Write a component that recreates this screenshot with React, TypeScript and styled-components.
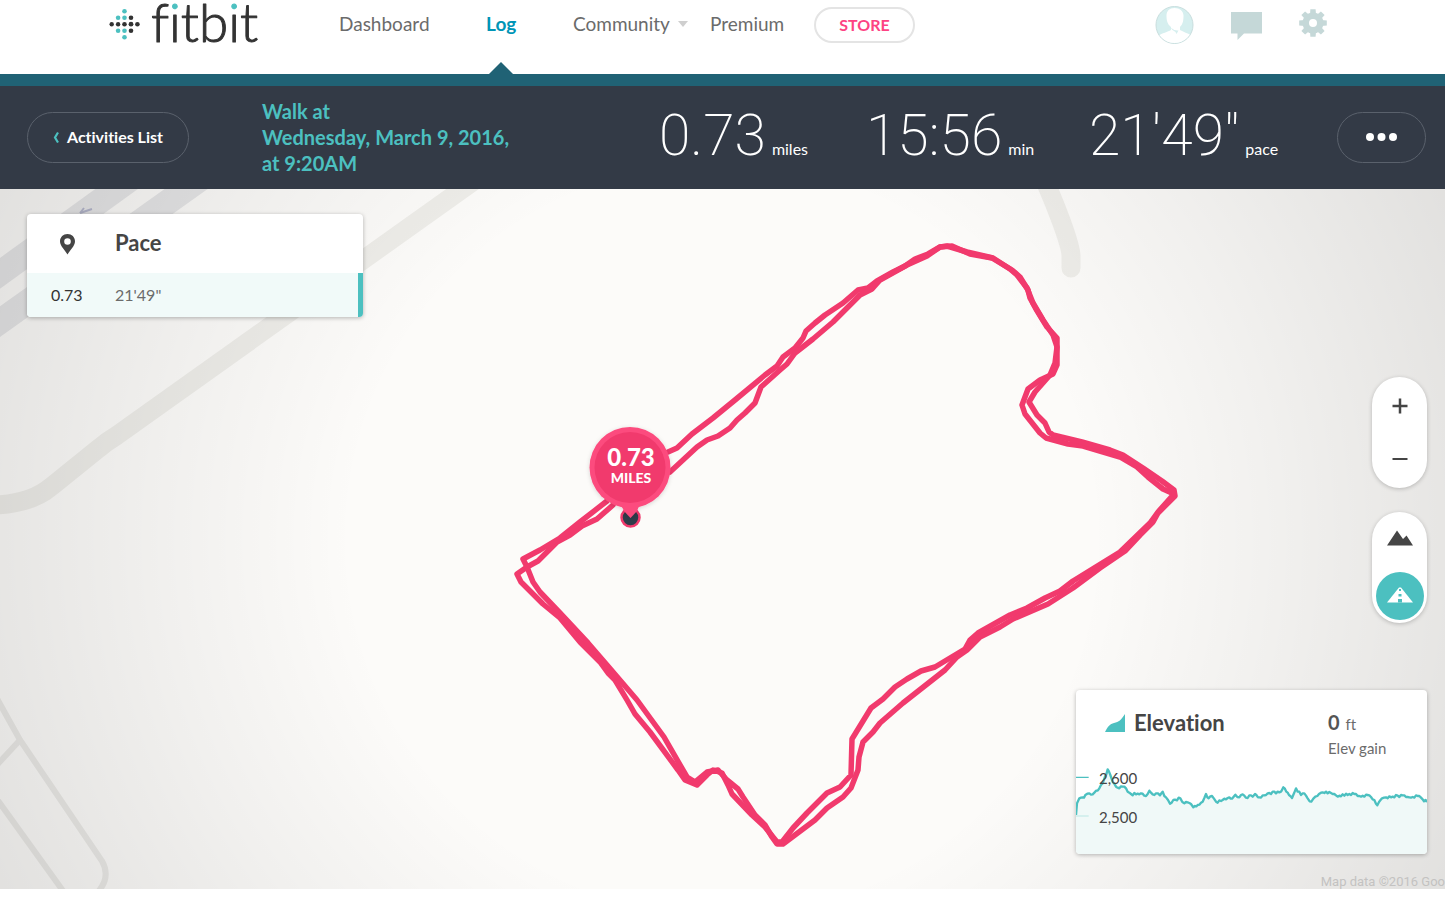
import React from "react";
import styled, { createGlobalStyle } from "styled-components";

const teal = "#4cc0c0";
const pink = "#f13a6d";
const ink = "#454545";

const GlobalStyle = createGlobalStyle`
  * { box-sizing: border-box; }
  body {
    margin: 0;
    background: #fff;
    color: ${ink};
    font-family: Lato, "Open Sans", sans-serif;
    font-variant-ligatures: none;
    overflow-x: hidden;
  }
  button { font: inherit; font-variant-ligatures: none; cursor: pointer; }
  a { text-decoration: none; }
`;

const Header = styled.header`
  display: grid;
  grid-template-columns: 229px auto 1fr auto;
  height: 86px;
  padding: 0 118px 0 110px;
  border-bottom: 12px solid #206275;
`;

const LogoLink = styled.a`
  display: block;
  height: 48px;
`;

const Nav = styled.nav`
  display: grid;
  grid-template-columns: 147px 87px 137px 104px auto;
  align-items: center;
  height: 48px;
`;

const NavLink = styled.a<{ $active?: boolean }>`
  position: relative;
  display: flex;
  align-items: center;
  gap: 8px;
  justify-self: start;
  font-size: 19px;
  line-height: 24px;
  font-weight: ${(p) => (p.$active ? 700 : 400)};
  color: ${(p) => (p.$active ? "#0095b6" : "#6b6b6b")};
`;

const ActiveMark = styled.span`
  position: absolute;
  top: 50px;
  left: 50%;
  margin-left: -12px;
  border: 12px solid transparent;
  border-top-width: 0;
  border-bottom-color: #206275;
`;

const Caret = styled.span`
  border: 5px solid transparent;
  border-bottom-width: 0;
  border-top: 6px solid #cfcfcf;
`;

const StoreLink = styled.a`
  width: 101px;
  height: 36px;
  margin-top: 2px;
  border: 2px solid #e4e4e4;
  border-radius: 18px;
  text-align: center;
  font-size: 16px;
  line-height: 32px;
  font-weight: 700;
  color: #fd4383;
`;

const Tools = styled.div`
  grid-column: 4;
  display: flex;
  align-items: center;
  gap: 37px;
  height: 50px;
`;

const IconButton = styled.button`
  display: flex;
  padding: 0;
  border: 0;
  background: none;
  color: #c5d8d8;
`;

const Summary = styled.section`
  display: grid;
  grid-template-columns: 235px minmax(260px, 397px) 207px 223px 1fr auto;
  align-items: center;
  height: 103px;
  padding: 0 19px 0 27px;
  background: #333a46;
  color: #fff;
`;

const PillButton = styled.button<{ $width: number }>`
  display: flex;
  align-items: center;
  justify-content: center;
  gap: 8px;
  width: ${(p) => p.$width}px;
  height: 51px;
  padding: 0 0 2px;
  border: 1px solid #5a616c;
  border-radius: 26px;
  background: none;
  color: #fff;
  font-size: 16px;
  line-height: 20px;
  font-weight: 700;
`;

const Title = styled.h1`
  margin: 0;
  padding-bottom: 2px;
  font-size: 20px;
  line-height: 26px;
  font-weight: 700;
  color: ${teal};
`;

const Metric = styled.div`
  display: flex;
  align-items: baseline;
  gap: 6px;
  padding-top: 10px;
  white-space: nowrap;
  font-size: 16px;
  line-height: 72px;
`;

const MetricValue = styled.span`
  font-family: Roboto, sans-serif;
  font-size: 57px;
  font-weight: 200;
`;

const MapArea = styled.main`
  position: relative;
  min-height: 700px;
  background: #fcfbf9;
  overflow: hidden;
`;

const MapDrawing = styled.svg`
  position: absolute;
  inset: 0;
  width: 100%;
  height: 100%;
`;

const Card = styled.section`
  position: absolute;
  background: #fff;
  border-radius: 4px;
  box-shadow: 0 1px 4px rgba(0, 0, 0, 0.28);
  overflow: hidden;
`;

const PaceCard = styled(Card)`
  top: 25px;
  left: 27px;
  width: 336px;
`;

const PaceTable = styled.table`
  width: 100%;
  border-collapse: collapse;
  text-align: left;
`;

const PaceHead = styled.th`
  height: 59px;
  padding: 0 0 2px;
  font-size: 22px;
  line-height: 26px;
  &:first-child { width: 88px; padding: 0 0 0 32px; }
  svg { display: block; }
`;

const PaceCell = styled.td`
  height: 44px;
  padding: 0 0 2px;
  background: #f1faf9;
  font-size: 16px;
  color: #6b6b6b;
  &:first-child { padding-left: 24px; color: #333; }
  &:last-child { border-right: 5px solid ${teal}; }
`;

const ControlGroup = styled.div<{ $inset: number }>`
  display: flex;
  flex-direction: column;
  align-items: center;
  justify-content: space-between;
  width: 55px;
  height: 111px;
  padding: ${(p) => p.$inset}px 3px;
  border-radius: 28px;
  background: #fff;
  box-shadow: 0 1px 4px rgba(0, 0, 0, 0.22);
`;

const Controls = styled.div`
  position: absolute;
  top: 188px;
  right: 18px;
  display: grid;
  gap: 24px;
`;

const RoundButton = styled.button<{ $active?: boolean }>`
  display: flex;
  align-items: center;
  justify-content: center;
  width: 48px;
  height: 48px;
  padding: 0;
  border: 0;
  border-radius: 50%;
  color: ${(p) => (p.$active ? "#fff" : ink)};
  background: ${(p) => (p.$active ? teal : "none")};
`;

const ElevationCard = styled(Card)`
  right: 18px;
  bottom: 35px;
  width: 351px;
`;

const ElevationHead = styled.div`
  display: flex;
  justify-content: space-between;
  height: 70px;
  padding: 20px 39px 0 29px;
`;

const ElevationTitle = styled.h2`
  display: flex;
  align-items: center;
  gap: 9px;
  height: 26px;
  margin: 0;
  font-size: 22px;
  line-height: 26px;
`;

const Gain = styled.div`
  width: 60px;
  white-space: nowrap;
  font-size: 15px;
  line-height: 24px;
  color: #6b6b6b;
  strong { font-size: 20px; color: #555; margin-right: 2px; }
`;

const Chart = styled.div`
  position: relative;
  height: 94px;
  svg { display: block; width: 100%; height: 94px; }
`;

const AxisLabel = styled.span<{ $top: number }>`
  position: absolute;
  left: 23px;
  top: ${(p) => p.$top}px;
  font-size: 15px;
  line-height: 18px;
`;

const Attribution = styled.small`
  position: absolute;
  right: 0;
  bottom: 0;
  white-space: nowrap;
  font-family: Roboto, sans-serif;
  font-size: 13px;
  line-height: 15px;
  color: #c3c2c1;
`;

const firstLap =
  "668,452 677,448 692,434 713,418 735,400 765,375 777,366 783,357 795,348 803,338 806,331 815,323 825,315 843,303 858,290 868,288 877,281 893,272 905,266 915,259 928,254 940,247 952,246 970,254 992,258 1012,270 1020,277 1028,290 1030,298 1036,309 1047,327 1057,338 1057,365 1053,374 1040,380 1028,389 1022,405 1025,414 1040,433 1046,438 1068,444 1083,446 1120,457 1137,467 1148,477 1163,489 1174,494 1158,512 1150,523 1120,552 1073,581 1060,591 1045,598 1027,608 1010,615 978,633 970,640 965,649 935,667 921,671 907,679 895,687 883,699 871,708 852,739 851,775 840,787 827,793 807,813 793,828 782,842 777,842 765,827 752,815 732,794 728,785 722,773 713,770 707,775 697,785 685,780 678,770 650,732 635,714 627,700 615,680 608,673 600,662 580,642 560,618 543,604 521,582 517,574 527,567 538,561 557,542 570,535 582,526 597,519 613,505";
const secondLap =
  "670,472 697,447 707,440 718,436 730,428 737,420 745,413 755,403 761,387 780,370 787,364 795,353 813,339 833,322 852,303 860,295 872,289 880,280 907,265 927,256 940,247 947,246 967,252 993,258 1010,269 1017,275 1027,288 1033,303 1043,320 1053,335 1057,347 1055,363 1050,375 1035,392 1029,402 1037,415 1045,423 1049,432 1053,435 1082,442 1110,450 1123,455 1143,468 1162,481 1174,490 1175,496 1158,513 1153,522 1140,535 1125,551 1100,568 1073,588 1048,604 1013,619 1000,627 980,637 967,650 957,657 945,670 903,703 880,723 873,732 863,742 859,757 858,770 851,788 843,797 827,808 815,820 783,844 777,844 772,837 765,825 755,815 743,797 738,789 727,780 718,770 707,772 695,782 687,777 680,765 664,737 637,700 607,665 588,643 560,613 540,592 533,582 527,567 523,559 540,550 560,538 580,522 607,501";

/* Elevation samples: distance and height, three units to the pixel. */
const samples: [number, number][] = [
  [0, 165], [3, 130], [10, 115], [20, 112], [28, 105], [40, 100], [50, 103], [60, 92], [70, 85], [80, 70],
  [87, 50], [95, 28], [103, 45], [110, 65], [125, 83], [145, 80], [155, 95], [165, 102], [195, 100], [210, 108],
  [220, 92], [230, 103], [240, 100], [252, 106], [260, 95], [270, 112], [282, 131], [292, 120], [313, 115],
  [325, 130], [335, 127], [345, 132], [352, 142], [365, 135], [380, 125], [390, 102], [398, 115], [408, 108],
  [420, 125], [440, 120], [460, 112], [468, 116], [478, 104], [490, 112], [500, 103], [510, 113], [520, 106],
  [530, 110], [537, 102], [550, 112], [570, 105], [590, 95], [610, 97], [622, 82], [635, 98], [648, 114],
  [660, 85], [675, 105], [685, 100], [695, 115], [706, 125], [718, 110], [735, 98], [750, 95], [770, 102],
  [785, 110], [800, 103], [835, 102], [850, 108], [880, 106], [895, 120], [904, 136], [918, 115], [930, 112],
  [980, 106], [1000, 112], [1030, 108], [1040, 118], [1053, 126],
];

const ripple = [0, 3, -3, -1, 4, -2, 2];
const profile = samples
  .flatMap(([x, y], i) => {
    const next = samples[i + 1];
    if (!next) return [[x, y]];
    const steps = Math.max(1, Math.round((next[0] - x) / 5));
    return Array.from({ length: steps }, (_, k) => [
      Math.round(x + ((next[0] - x) * k) / steps),
      Math.round(y + ((next[1] - y) * k) / steps + (k === 0 ? 0 : ripple[(i + k) % 7])),
    ]);
  })
  .map((p) => p.join(","))
  .join(" ");

function Logo() {
  return (
    <svg width="156" height="48" viewBox="110 0 156 48" overflow="visible" role="img" aria-label="fitbit">
      <defs>
        {/* Teal above the x-height, so that only the dot of each i takes it. */}
        <linearGradient id="dotted" gradientUnits="userSpaceOnUse" x1="0" y1="0" x2="0" y2="48">
          <stop offset="0.290" stopColor={teal} />
          <stop offset="0.290" stopColor="#333" />
        </linearGradient>
      </defs>
      <g fill="#333">
        <circle cx="111.7" cy="24.2" r="2.2" />
        <circle cx="118.1" cy="24.2" r="2.2" />
        <circle cx="124.5" cy="24.2" r="2.3" />
        <circle cx="131" cy="24.2" r="2.4" />
        <circle cx="137.4" cy="24.2" r="2.3" />
        <circle cx="131" cy="17.8" r="2.3" />
        <circle cx="131" cy="30.7" r="2.3" />
      </g>
      <g fill={teal}>
        <circle cx="124.5" cy="11.3" r="2.3" />
        <circle cx="118.1" cy="17.8" r="2.3" />
        <circle cx="124.5" cy="17.8" r="2.3" />
        <circle cx="118.1" cy="30.7" r="2.3" />
        <circle cx="124.5" cy="30.7" r="2.3" />
        <circle cx="124.5" cy="37.2" r="2.3" />
      </g>
      <text x="151" y="42" fontFamily="Lato" fontWeight="300" fontSize="53" fill="#333" stroke="#333" strokeLinejoin="round">
        f<tspan fill="url(#dotted)" stroke="url(#dotted)">i</tspan>tb<tspan fill="url(#dotted)" stroke="url(#dotted)">i</tspan>t
      </text>
    </svg>
  );
}

function MapCanvas() {
  return (
    <MapDrawing viewBox="0 189 1445 700" preserveAspectRatio="xMidYMid slice" role="img" aria-label="Route map">
      <defs>
        <radialGradient id="vignette" gradientUnits="userSpaceOnUse" cx="722" cy="539" r="802">
          <stop offset="0.46" stopColor="#000" stopOpacity="0" />
          <stop offset="0.7" stopColor="#000" stopOpacity="0.045" />
          <stop offset="1" stopColor="#000" stopOpacity="0.105" />
        </radialGradient>
        <filter id="pinShadow" x="-20%" y="-20%" width="140%" height="140%">
          <feDropShadow dx="0" dy="1" stdDeviation="2" floodOpacity="0.15" />
        </filter>
      </defs>
      <g fill="none">
        <g stroke="#e6e6e7" strokeWidth="25">
          <path d="M-30 295 L147 167" />
          <path d="M-30 343 L217 167" />
        </g>
        <path d="M80 213 L92 209 M80 213 L84 208" stroke="#b3b5ca" strokeWidth="2" />
        <g stroke="#eeede9" strokeWidth="19">
          <path d="M-10 505 Q30 505 52 486 L98 449 Q106 442 116 436 L492 168" />
          <path d="M1040 170 C1056 205 1071 245 1071 256 V268" strokeLinecap="round" />
        </g>
        <g stroke="#ebeae7" strokeWidth="6">
          <path d="M-10 686 L20 740 L102 861 Q111 877 98 892" />
          <path d="M20 740 L-6 768" />
          <path d="M-6 795 L66 895" />
        </g>
      </g>
      <rect x="0" y="189" width="1445" height="700" fill="url(#vignette)" />
      <g fill="none" stroke={pink} strokeWidth="5.5" strokeLinejoin="round" strokeLinecap="round">
        <polyline points={firstLap} />
        <polyline points={secondLap} />
      </g>
      <circle cx="630.5" cy="517.5" r="9" fill="#2f3c4a" stroke={pink} strokeWidth="2.5" />
      <g filter="url(#pinShadow)">
        <circle cx="630" cy="467.500" r="40.500" fill="#fc4c7e" />
        <path d="M620 505 H640 Q638 508 637 511 L630.500 518 L624 511 Q623 508 620 505Z" fill="#fc4c7e" />
      </g>
      <circle cx="630" cy="467.500" r="35.500" fill={pink} />
      <g fill="#fff" fontFamily="Lato" fontWeight="900" textAnchor="middle">
        <text x="631" y="466" fontSize="24">0.73</text>
        <text x="631" y="483" fontSize="14">MILES</text>
      </g>
    </MapDrawing>
  );
}

export default function App() {
  return (
    <>
      <GlobalStyle />
      <Header>
        <LogoLink href="#home"><Logo /></LogoLink>
        <Nav aria-label="Main">
          <NavLink href="#dashboard">Dashboard</NavLink>
          <NavLink href="#log" $active aria-current="page">Log<ActiveMark /></NavLink>
          <NavLink href="#community">Community<Caret /></NavLink>
          <NavLink href="#premium">Premium</NavLink>
          <StoreLink href="#store">STORE</StoreLink>
        </Nav>
        <Tools>
          <IconButton aria-label="Profile">
            <svg width="39" height="38" viewBox="0 0 39 38">
              <clipPath id="avatar"><circle cx="19.500" cy="19" r="18" /></clipPath>
              <circle cx="19.500" cy="19" r="18.500" fill="#d6efef" stroke="#c9dede" />
              <g clipPath="url(#avatar)" fill="#fff">
                <path d="M19.500 2C14.500 2 11.500 5 11.500 9.500c0 5 .8 8.500 4.500 11.500V24c-3 2-9 3-13 6v9h34v-9c-4-3-9-4-12-6v-3c3-3 3.500-6.500 3.500-11.500C28.500 5 24.500 2 19.500 2Z" />
                <path d="M15.500 21.500q4 3.500 8 3l-2 3.500l-1-2q-3-1-5-4.500Z" fill="#d6efef" />
              </g>
            </svg>
          </IconButton>
          <IconButton aria-label="Messages">
            <svg width="31" height="29" viewBox="0 0 31 29" fill="currentColor">
              <path d="M0 1H31V22.500H13L6.500 29V22.500H0Z" />
            </svg>
          </IconButton>
          <IconButton aria-label="Settings">
            <svg width="28" height="32" viewBox="-14 -14 28 32" fill="currentColor">
              <path fillRule="evenodd" d="M-10.500 0a10.500 10.500 0 1 0 21 0a10.500 10.500 0 1 0-21 0ZM-4 0a4 4 0 1 1 8 0a4 4 0 1 1-8 0Z" />
              {[0, 45, 90, 135, 180, 225, 270, 315].map((a) => (
                <path key={a} d="M-3-8.500L-2.600-13.800H2.600L3-8.500Z" transform={`rotate(${a})`} />
              ))}
            </svg>
          </IconButton>
        </Tools>
      </Header>
      <Summary>
        <PillButton $width={162}>
          <svg width="6" height="12" viewBox="0 0 6 12" fill="none" stroke={teal} strokeWidth="2.200">
            <path d="M5 1.500L2 6.500L5 11.500" />
          </svg>
          Activities List
        </PillButton>
        <Title>Walk at<br />Wednesday, March 9, 2016,<br />at 9:20AM</Title>
        <Metric><MetricValue>0.73</MetricValue>miles</Metric>
        <Metric><MetricValue>15:56</MetricValue>min</Metric>
        <Metric><MetricValue>21'49"</MetricValue>pace</Metric>
        <PillButton $width={89} aria-label="More">
          <svg width="31" height="8" viewBox="0 0 31 8" fill="#fff">
            <circle cx="4" cy="4" r="4" />
            <circle cx="15.500" cy="4" r="4" />
            <circle cx="27" cy="4" r="4" />
          </svg>
        </PillButton>
      </Summary>
      <MapArea>
        <MapCanvas />
        <PaceCard>
          <PaceTable>
            <thead>
              <tr>
                <PaceHead scope="col" aria-label="Distance">
                  <svg width="17" height="22" viewBox="0 0 17 22" fill={ink}>
                    <path fillRule="evenodd" d="M8.500 1C4.200 1 1 4.200 1 8.300C1 13 5.500 16.500 8.500 21.500C11.500 16.500 16 13 16 8.300C16 4.200 12.800 1 8.500 1ZM8.500 5.200a3.300 3.300 0 1 1 0 6.600a3.300 3.300 0 1 1 0-6.600Z" />
                  </svg>
                </PaceHead>
                <PaceHead scope="col">Pace</PaceHead>
              </tr>
            </thead>
            <tbody>
              <tr>
                <PaceCell>0.73</PaceCell>
                <PaceCell>21'49"</PaceCell>
              </tr>
            </tbody>
          </PaceTable>
        </PaceCard>
        <Controls>
          <ControlGroup $inset={5}>
            <RoundButton aria-label="Zoom in">
              <svg width="16" height="16" viewBox="0 0 16 16" stroke={ink} strokeWidth="2.500"><path d="M0.500 8H15.500M8 0.500V15.500" /></svg>
            </RoundButton>
            <RoundButton aria-label="Zoom out">
              <svg width="16" height="16" viewBox="0 0 16 16" stroke={ink} strokeWidth="2"><path d="M0.500 8H15.500" /></svg>
            </RoundButton>
          </ControlGroup>
          <ControlGroup $inset={3}>
            <RoundButton aria-label="Terrain view">
              <svg width="26" height="18" viewBox="0 0 26 18" fill={ink}><path d="M0 15.500L10 .500L16 9L19.500 5.500L26 15.500Z" /></svg>
            </RoundButton>
            <RoundButton $active aria-label="Road view" aria-pressed="true">
              <svg width="26" height="18" viewBox="0 0 26 18" fill="#fff">
                <path d="M0 15.500L12 .500H14L26 15.500Z" />
                <path d="M12 2h2v2h-2ZM11.500 7h3v2.500h-3ZM11 12h4v3.500h-4Z" fill={teal} />
              </svg>
            </RoundButton>
          </ControlGroup>
        </Controls>
        <ElevationCard>
          <ElevationHead>
            <ElevationTitle>
              <svg width="20" height="18" viewBox="0 0 20 18" fill={teal}><path d="M0 18C3 12 5 10 9 9C14 8 16 6 20 0V18Z" /></svg>
              Elevation
            </ElevationTitle>
            <Gain><strong>0</strong> ft<br />Elev gain</Gain>
          </ElevationHead>
          <Chart>
            <svg viewBox="0 0 1053 282" preserveAspectRatio="none" aria-hidden="true">
              <polygon points={`0,282 ${profile} 1053,282`} fill="#f0f9f8" />
              <path d="M0 52H38" stroke={teal} strokeWidth="4" />
              <path d="M0 168H38" stroke="#cdeceb" strokeWidth="4" />
              <polyline points={profile} fill="none" stroke={teal} strokeWidth="7" strokeLinejoin="round" />
            </svg>
            <AxisLabel $top={9}>2,600</AxisLabel>
            <AxisLabel $top={48}>2,500</AxisLabel>
          </Chart>
        </ElevationCard>
        <Attribution>Map data ©2016 Goo</Attribution>
      </MapArea>
    </>
  );
}
